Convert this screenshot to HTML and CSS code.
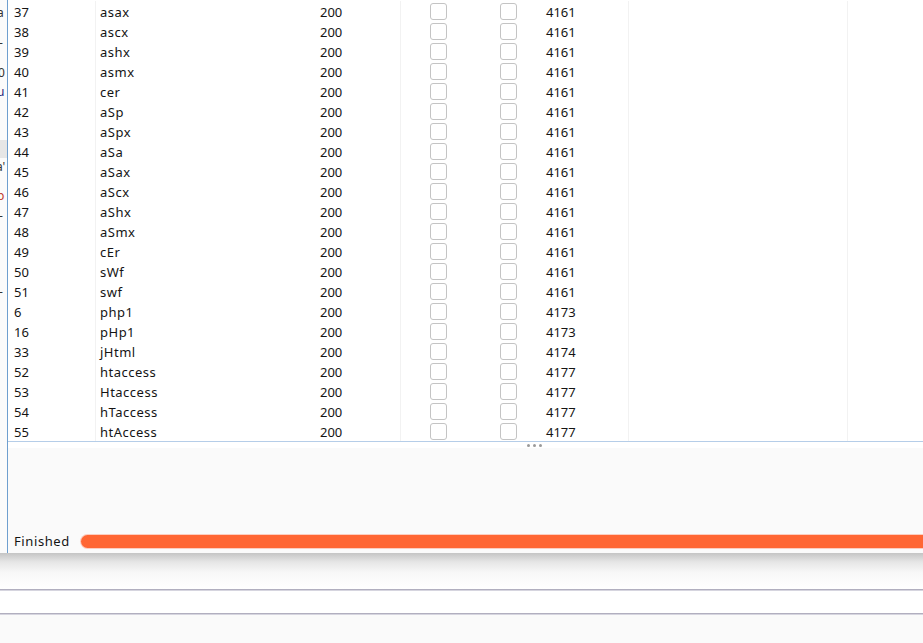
FILE: index.html
```html
<!DOCTYPE html>
<html>
<head>
<meta charset="utf-8">
<link rel="stylesheet" href="styles.css">
</head>
<body>
<div class="desktop">
  <div class="top">
    <div class="behind">
      <span class="frag f1">a</span>
      <span class="frag f2">-</span>
      <span class="frag f3">0</span>
      <span class="frag f4">u</span>
      <span class="frag f5"></span>
      <span class="frag f6">a'</span>
      <span class="frag f7">p</span>
      <span class="frag f8">-</span>
      <span class="frag f9">-</span>
    </div>
    <div class="window">
      <div class="table" id="table"></div>
      <div class="splitter"><i></i><i></i><i></i></div>
      <div class="panel">
        <div class="status">
          <span class="status-text">Finished</span>
          <div class="progress"></div>
        </div>
      </div>
    </div>
  </div>
  <div class="shadow"></div>
  <div class="rule"></div>
  <div class="band"></div>
  <div class="rule"></div>
  <div class="rest"></div>
</div>
<script>
var rows = [
  ["37","asax","4161"],["38","ascx","4161"],["39","ashx","4161"],["40","asmx","4161"],
  ["41","cer","4161"],["42","aSp","4161"],["43","aSpx","4161"],["44","aSa","4161"],
  ["45","aSax","4161"],["46","aScx","4161"],["47","aShx","4161"],["48","aSmx","4161"],
  ["49","cEr","4161"],["50","sWf","4161"],["51","swf","4161"],["6","php1","4173"],
  ["16","pHp1","4173"],["33","jHtml","4174"],["52","htaccess","4177"],["53","Htaccess","4177"],
  ["54","hTaccess","4177"],["55","htAccess","4177"]
];
var t = document.getElementById('table');
var html = '';
rows.forEach(function (r) {
  html += '<div class="row">' +
    '<div class="c c-req">' + r[0] + '</div>' +
    '<div class="c c-pay">' + r[1] + '</div>' +
    '<div class="c c-st">200</div>' +
    '<div class="c c-err"><span class="cb"></span></div>' +
    '<div class="c c-to"><span class="cb"></span></div>' +
    '<div class="c c-len">' + r[2] + '</div>' +
    '<div class="c c-com"></div>' +
    '<div class="c c-last"></div>' +
    '</div>';
});
t.innerHTML = html;
</script>
</body>
</html>
```
FILE: styles.css
```css
html, body {
  margin: 0;
  padding: 0;
  background: #fafafa;
  overflow: hidden;
}
body {
  width: 923px;
  height: 643px;
  font-family: "Noto Sans", "Open Sans", sans-serif;
  font-size: 13px;
  color: #141414;
}
.desktop {
  display: flex;
  flex-direction: column;
  height: 643px;
}
.top {
  display: flex;
  height: 553px;
}
.behind {
  width: 7px;
  flex: none;
  position: relative;
  background: #fbfbfb;
  overflow: hidden;
}
.frag {
  position: absolute;
  left: -2px;
  font-size: 12px;
  line-height: 12px;
  color: #333;
}
.f1 { top: 7px; left: -3px; }
.f2 { top: 37px; left: -1px; }
.f3 { top: 67px; left: -2px; }
.f4 { top: 86px; color: #23237a; left: -3px; }
.f5 { top: 140px; left: 0; width: 7px; height: 18px; background: #e6e6e6; }
.f6 { top: 161px; left: -4px; }
.f7 { top: 190px; color: #c0392b; left: -3px; }
.f8 { top: 210px; left: -1px; }
.f9 { top: 286px; left: -1px; }
.window {
  flex: 1;
  display: flex;
  flex-direction: column;
  border-left: 1px solid #6f9fcf;
  background: #fafafa;
  min-width: 0;
}
.table {
  background: #fff;
  padding-top: 1px;
  height: 440px;
  border-bottom: 1px solid #b5cde8;
  overflow: hidden;
}
.row {
  display: grid;
  grid-template-columns: 88px 218px 87px 69px 70px 89px 219px 1fr;
  height: 20px;
}
.c {
  white-space: nowrap;
  overflow: hidden;
  padding-top: 2px;
  line-height: 18px;
}
.c-req { padding-left: 6px; border-right: 1px solid #f2f2f2; }
.c-pay { padding-left: 4px; letter-spacing: 0.5px; }
.c-st { padding-left: 6px; border-right: 1px solid #f2f2f2; }
.c-err { padding: 0 0 0 29px; display: flex; align-items: center; }
.c-to { padding: 0 0 0 30px; display: flex; align-items: center; }
.c-len { padding-left: 6px; border-right: 1px solid #f2f2f2; }
.c-com { border-right: 1px solid #f2f2f2; }
.cb {
  display: block;
  width: 15px;
  height: 15px;
  border: 1.5px solid #c4c4c4;
  border-radius: 3px;
  background: #fff;
}
.splitter {
  height: 6px;
  background: #fff;
  display: flex;
  justify-content: center;
  align-items: center;
  gap: 3px;
  padding-left: 137px;
}
.splitter i {
  width: 3px;
  height: 3px;
  border-radius: 50%;
  background: #9a9a9a;
}
.panel {
  flex: 1;
  display: flex;
  flex-direction: column;
  justify-content: flex-end;
  padding-bottom: 5px;
}
.status {
  display: flex;
  align-items: center;
  height: 14px;
}
.status-text {
  padding-left: 6px;
  width: 67px;
  flex: none;
  line-height: 14px;
  letter-spacing: 0.6px;
}
.progress {
  flex: 1;
  height: 13px;
  background: #ff6633;
  border-radius: 7px 0 0 7px;
  box-shadow: 0 0 0 1px rgba(255, 120, 80, 0.35);
}
.shadow {
  height: 36px;
  background: linear-gradient(to bottom, #c4c4c4 0%, #e6e6e6 25%, #f8f8f8 55%, #ffffff 100%);
}
.rule {
  height: 1px;
  background: #b1afbf;
  border-bottom: 1px solid #d6d5df;
}
.band {
  height: 22px;
  background: #fff;
}
.rest {
  flex: 1;
  background: #fafafa;
}
```
